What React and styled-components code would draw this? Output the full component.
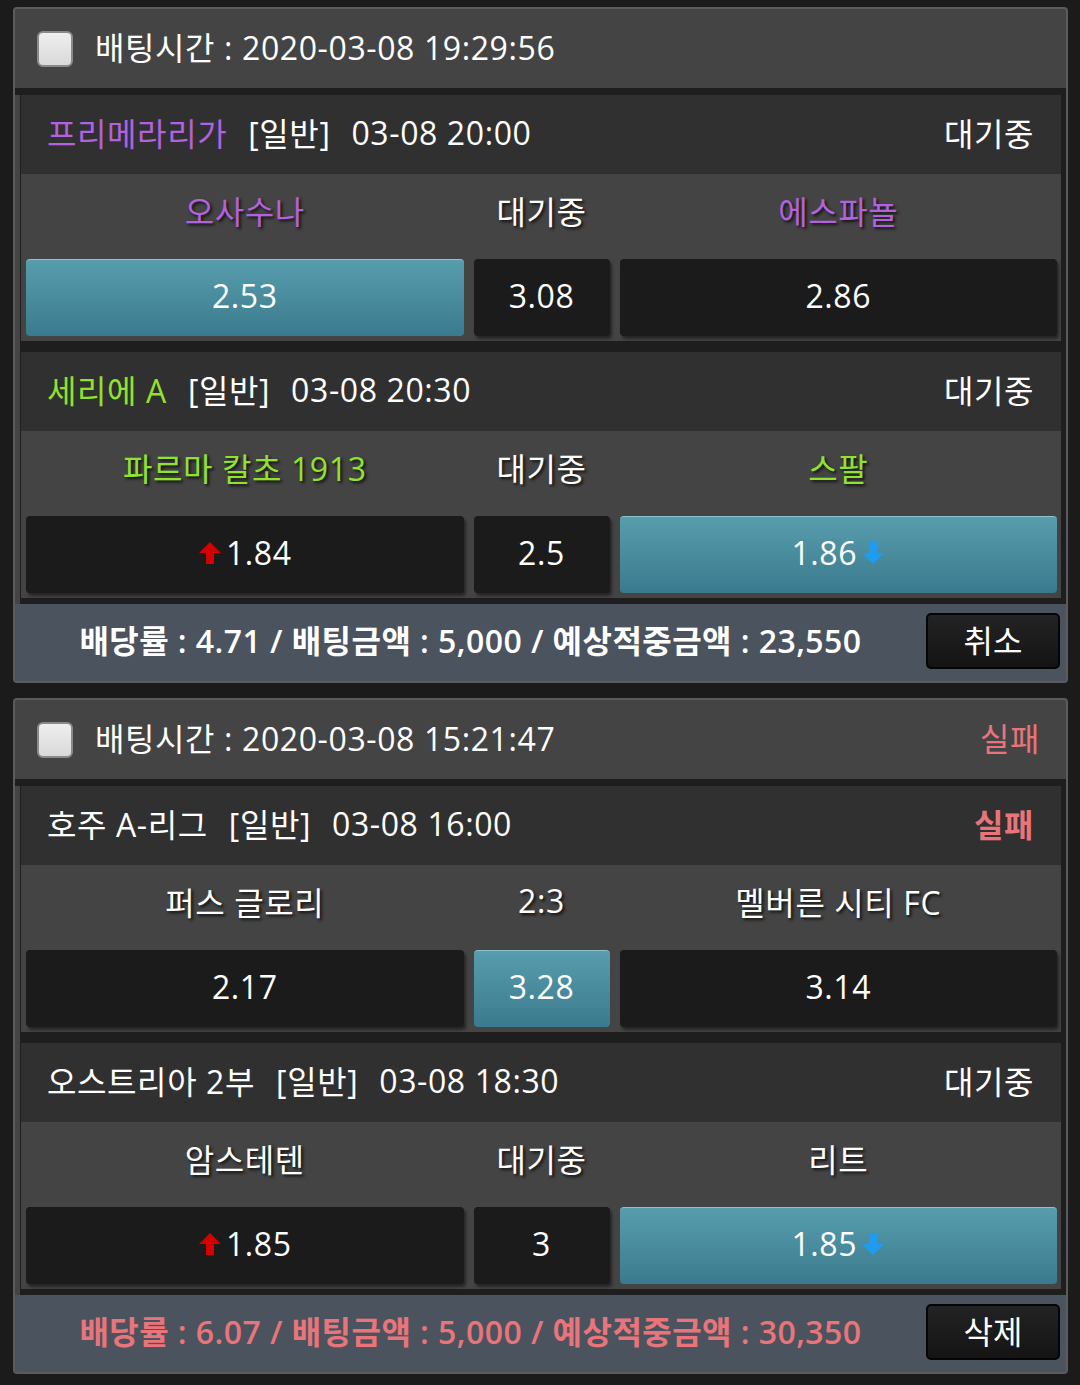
import React from 'react';
import styled, { createGlobalStyle } from 'styled-components';

const GlobalStyle = createGlobalStyle`
  html, body {
    margin: 0;
    padding: 0;
    background: #1b1b1b;
  }
  body {
    font-family: "Open Sans", "Noto Sans CJK KR", sans-serif;
    letter-spacing: 0.6px;
    color: #fff;
  }
`;

const PURPLE = '#b262de';
const GREEN = '#90e22e';
const RED = '#e9757a';

const Page = styled.div`
  width: 1080px;
  padding: 7px 12px 13px 13px;
  box-sizing: border-box;
  display: flex;
  flex-direction: column;
  gap: 15px;
`;

const Card = styled.div`
  border: 2px solid #5b5b5b;
  border-radius: 4px;
  background: #444;
  overflow: hidden;
`;

const Header = styled.div`
  height: 79px;
  box-sizing: content-box;
  display: flex;
  align-items: center;
  padding: 0 26px 0 22px;
  border-bottom: 7px solid #1e1e1e;
  font-size: 32px;
`;

const HeaderInner = styled.div`
  flex: 1;
  display: flex;
  align-items: center;
  padding-bottom: 6px;
`;

const Check = styled.span`
  width: 32px;
  height: 32px;
  border: 2px solid #8a8a8a;
  border-radius: 6px;
  background: linear-gradient(#efefef, #d9d9d9);
  margin-right: 22px;
  margin-top: 6px;
`;

const HeaderStatus = styled.span`
  margin-left: auto;
  color: ${RED};
`;

const Games = styled.div`
  margin-left: 5px;
  padding: 0 5px 6px 1px;
  background: #1e1e1e;
  display: flex;
  flex-direction: column;
  gap: 11px;
`;

const Game = styled.div`
  background: #444;
`;

const LeagueRow = styled.div`
  height: 79px;
  box-sizing: border-box;
  background: #303030;
  display: flex;
  align-items: center;
  gap: 21px;
  padding: 0 27px 5px 26px;
  font-size: 32px;
`;

const LeagueName = styled.span`
  color: ${(p) => p.$color || '#fff'};
`;

const GameState = styled.span`
  margin-left: auto;
  color: ${(p) => (p.$fail ? RED : '#fff')};
  font-weight: ${(p) => (p.$fail ? 600 : 400)};
`;

const Columns = styled.div`
  display: grid;
  grid-template-columns: 1fr 136px 1fr;
  column-gap: 10px;
  padding: 0 4px 0 5px;
`;

const TeamRow = styled(Columns)`
  height: 80px;
  box-sizing: border-box;
  padding-bottom: 9px;
  align-items: center;
  font-size: 32px;
  text-shadow: 2px 2px 3px #111;
`;

const Team = styled.span`
  text-align: center;
  color: ${(p) => p.$color || '#fff'};
`;

const OddsRow = styled(Columns)`
  padding-top: 5px;
  padding-bottom: 5px;
`;

const OddButton = styled.div`
  height: 77px;
  border-radius: 4px;
  display: flex;
  align-items: center;
  justify-content: center;
  gap: 4px;
  padding-bottom: 5px;
  font-size: 32px;
  box-sizing: border-box;
  background: ${(p) =>
    p.$active ? 'linear-gradient(#579dad, #3b7a8e)' : '#1b1b1b'};
  border-top: 1px solid ${(p) => (p.$active ? '#8cc3cf' : '#1b1b1b')};
  box-shadow: ${(p) =>
    p.$active ? 'none' : '2px 3px 3px rgba(0, 0, 0, 0.45)'};
`;

const Footer = styled.div`
  height: 77px;
  box-sizing: border-box;
  background: #4b535f;
  display: flex;
  align-items: center;
  padding: 0 6px 4px 0;
`;

const Summary = styled.div`
  flex: 1;
  text-align: center;
  font-size: 32px;
  font-weight: 600;
  letter-spacing: 0.45px;
  padding-bottom: 4px;
  color: ${(p) => (p.$fail ? RED : '#fff')};
`;

const ActionButton = styled.button`
  width: 134px;
  height: 56px;
  border: 2px solid #050505;
  border-radius: 5px;
  background: linear-gradient(#232323, #141414);
  color: #fff;
  font-family: inherit;
  font-size: 32px;
  padding: 0 0 4px;
`;

const UpArrow = () => (
  <svg width="24" height="24" viewBox="0 0 24 24">
    <polygon points="12,1 23,12 16,12 16,23 8,23 8,12 1,12" fill="#d40000" />
  </svg>
);

const DownArrow = () => (
  <svg width="24" height="24" viewBox="0 0 24 24">
    <polygon points="8,1 16,1 16,12 23,12 12,23 1,12 8,12" fill="#1e9cf2" />
  </svg>
);

const bets = [
  {
    time: '2020-03-08 19:29:56',
    status: null,
    games: [
      {
        league: '프리메라리가',
        color: PURPLE,
        date: '03-08 20:00',
        state: '대기중',
        home: '오사수나',
        mid: '대기중',
        away: '에스파뇰',
        odds: ['2.53', '3.08', '2.86'],
        pick: 0,
      },
      {
        league: '세리에 A',
        color: GREEN,
        date: '03-08 20:30',
        state: '대기중',
        home: '파르마 칼초 1913',
        mid: '대기중',
        away: '스팔',
        odds: ['1.84', '2.5', '1.86'],
        pick: 2,
        arrows: true,
      },
    ],
    summary: '배당률 : 4.71 / 배팅금액 : 5,000 / 예상적중금액 : 23,550',
    action: '취소',
  },
  {
    time: '2020-03-08 15:21:47',
    status: '실패',
    games: [
      {
        league: '호주 A-리그',
        date: '03-08 16:00',
        state: '실패',
        fail: true,
        home: '퍼스 글로리',
        mid: '2:3',
        away: '멜버른 시티 FC',
        odds: ['2.17', '3.28', '3.14'],
        pick: 1,
      },
      {
        league: '오스트리아 2부',
        date: '03-08 18:30',
        state: '대기중',
        home: '암스테텐',
        mid: '대기중',
        away: '리트',
        odds: ['1.85', '3', '1.85'],
        pick: 2,
        arrows: true,
      },
    ],
    summary: '배당률 : 6.07 / 배팅금액 : 5,000 / 예상적중금액 : 30,350',
    action: '삭제',
    fail: true,
  },
];

const GameBlock = ({ game }) => (
  <Game>
    <LeagueRow>
      <LeagueName $color={game.color}>{game.league}</LeagueName>
      <span>[일반]</span>
      <span>{game.date}</span>
      <GameState $fail={game.fail}>{game.state}</GameState>
    </LeagueRow>
    <TeamRow>
      <Team $color={game.color}>{game.home}</Team>
      <Team>{game.mid}</Team>
      <Team $color={game.color}>{game.away}</Team>
    </TeamRow>
    <OddsRow>
      {game.odds.map((odd, i) => (
        <OddButton key={i} $active={game.pick === i}>
          {game.arrows && i === 0 && <UpArrow />}
          {odd}
          {game.arrows && i === 2 && <DownArrow />}
        </OddButton>
      ))}
    </OddsRow>
  </Game>
);

const App = () => (
  <>
    <GlobalStyle />
    <Page>
      {bets.map((bet) => (
        <Card key={bet.time}>
          <Header>
            <HeaderInner>
              <Check />
              배팅시간 : {bet.time}
              {bet.status && <HeaderStatus>{bet.status}</HeaderStatus>}
            </HeaderInner>
          </Header>
          <Games>
            {bet.games.map((g) => (
              <GameBlock key={g.league} game={g} />
            ))}
          </Games>
          <Footer>
            <Summary $fail={bet.fail}>{bet.summary}</Summary>
            <ActionButton>{bet.action}</ActionButton>
          </Footer>
        </Card>
      ))}
    </Page>
  </>
);

export default App;
